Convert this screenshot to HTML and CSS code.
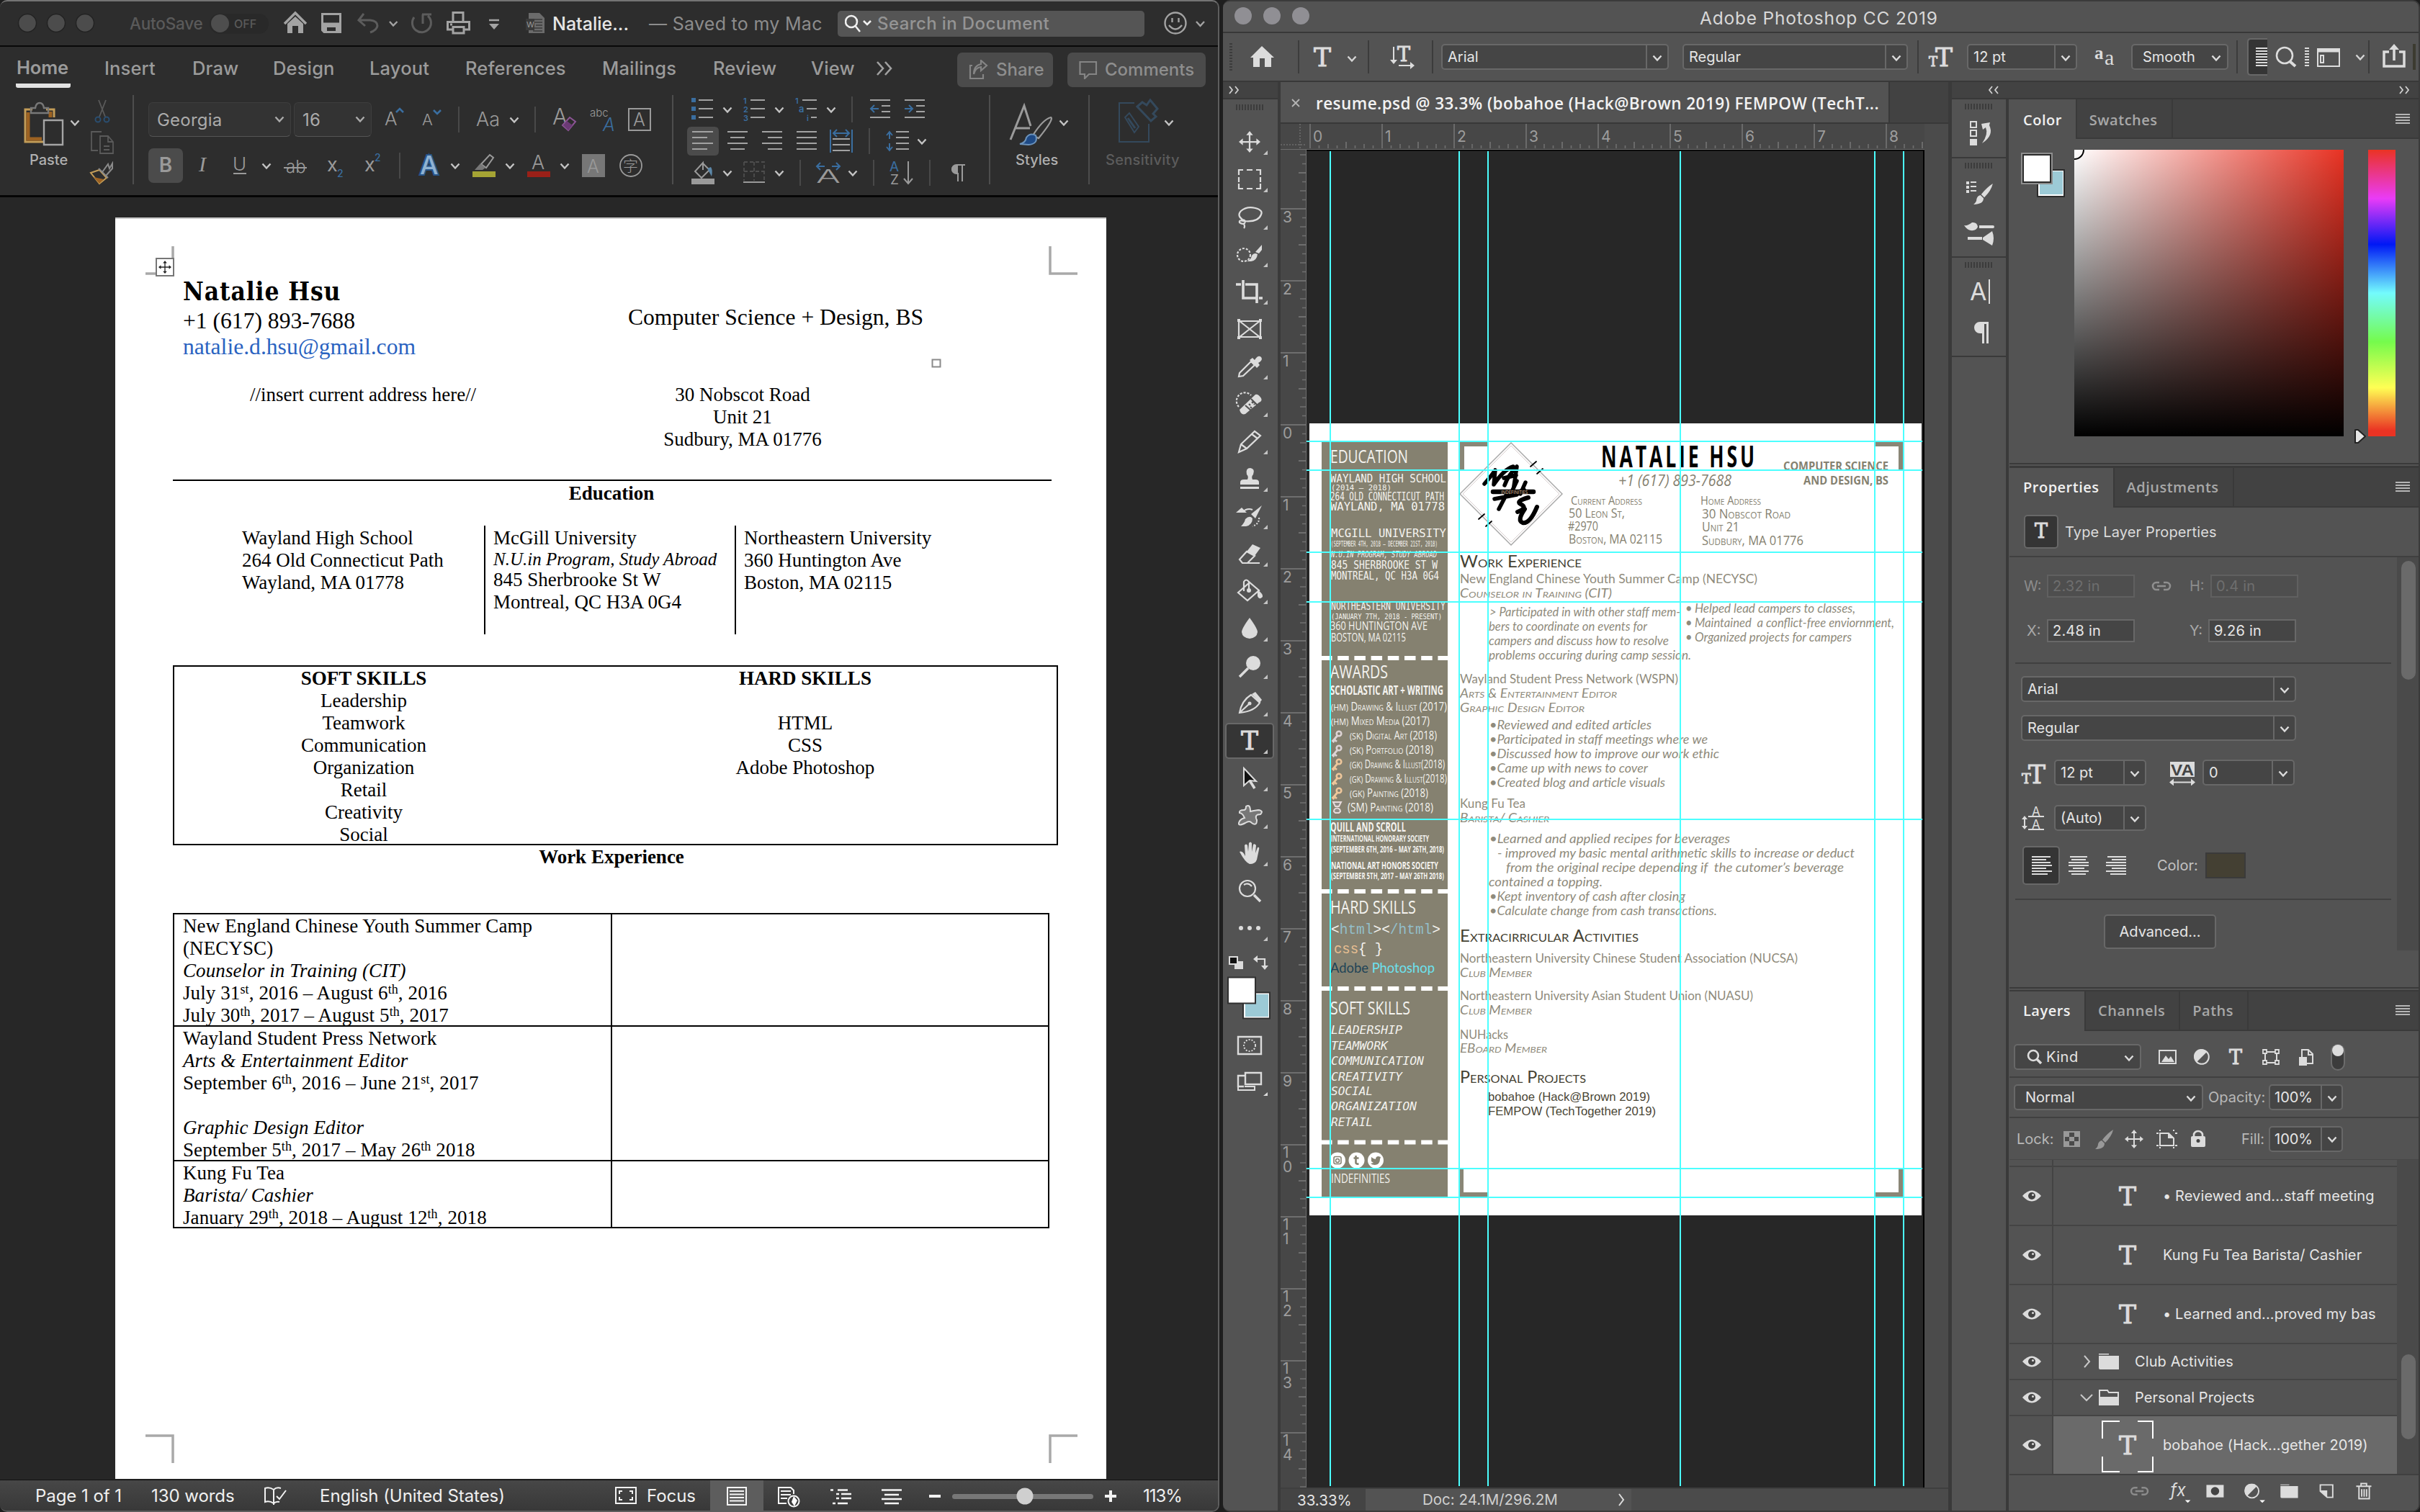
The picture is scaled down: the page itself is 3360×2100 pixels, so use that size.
FILE: index.html
```html
<!DOCTYPE html>
<html lang="en">
<head>
<meta charset="utf-8">
<title>Resume workspace</title>
<link rel="stylesheet" href="styles.css">
</head>
<body>
<svg class="defs" width="0" height="0">
  <defs>
    <symbol id="chev" viewBox="0 0 14 10" overflow="visible"><path d="M1.5 1.5L7 7.5L12.5 1.5" fill="none" stroke="currentColor" stroke-width="2.4"/></symbol>
    <symbol id="move" viewBox="-16 -16 32 32" overflow="visible"><path d="M0-12V12M-12 0H12" stroke="currentColor" stroke-width="2.4"/><path d="M0-16l5 6h-10zM0 16l5-6h-10zM-16 0l6-5v10zM16 0l-6-5v10z" fill="currentColor"/></symbol>
    <symbol id="eye" viewBox="0 0 26 16"><path d="M0 8Q13-7 26 8Q13 23 0 8z" fill="#dcdcdc"/><circle cx="13" cy="8" r="5" fill="#444"/><circle cx="14.500" cy="6.500" r="1.500" fill="#dcdcdc"/></symbol>
    <symbol id="link" viewBox="0 0 30 16"><path d="M12 13H8A5 5 0 0 1 8 3H12M18 3H22A5 5 0 0 1 22 13H18M9 8H21" fill="none" stroke="currentColor" stroke-width="2.600"/></symbol>
    <symbol id="folder" viewBox="0 0 28 22"><path d="M0 0H14V1.500H0zM0 3H28V22H2Q0 22 0 20z" fill="#dcdcdc"/></symbol>
    <symbol id="half" viewBox="0 0 22 22"><circle cx="11" cy="11" r="9.800" fill="#535353" stroke="#dcdcdc" stroke-width="2"/><path d="M18 4A10 10 0 1 0 4 18z" fill="#dcdcdc"/></symbol>
    <symbol id="menu" viewBox="0 0 20 14"><path d="M0 1H20M0 5H20M0 9H20M0 13H20" stroke="#b5b5b5" stroke-width="1.800"/></symbol>
    <symbol id="brush" viewBox="0 0 26 28"><path d="M25 0Q17 5 10 14L14 18Q23 9 25 0zM9 15L13 19Q13 27 0 27Q4 24 4 20Q5 16 9 15z" fill="currentColor"/></symbol>
    <symbol id="key" viewBox="0 0 16 18"><circle cx="11" cy="5" r="3.300" fill="none" stroke="currentColor" stroke-width="2.600"/><path d="M9 7.500L2 16M4.500 13l3.500 3M1.500 14l3 3" stroke="currentColor" stroke-width="2.800"/></symbol>
  </defs>
</svg>

<section class="word">
  <header class="w-title">
    <svg width="170" height="61" viewBox="0 2 170 61"><g fill="#4c4c4c" stroke="#232323" stroke-width="1.500"><circle cx="38" cy="32" r="12.500"/><circle cx="78" cy="32" r="12.500"/><circle cx="118" cy="32" r="12.500"/></g></svg>
    <span class="autosave">AutoSave</span>
    <span class="toggle"><i></i>OFF</span>
    <svg width="378" height="61" viewBox="382 2 378 61" fill="none" stroke="#a3a3a3" stroke-width="3">
      <path d="M395 33L410 18L425 33" stroke-width="3.500"/><path d="M399 46V33L410 23L421 33V46H414V36H406V46z" fill="#a3a3a3" stroke="none"/>
      <path d="M447.500 19.500H472.500V44.500H450L447.500 42zM447 33H473"/><path d="M448 34H472V44H466V38H454V44H448z" fill="#a3a3a3" stroke="none"/>
      <g stroke="#5c5c5c"><path d="M505 19L498 28L507 36M498 28H514Q524 29 524 36Q523 42 514 45"/><path d="M575 24A13 13 0 1 0 594 22M586 20H599M587 20V33"/></g>
      <path d="M541 30L546 35.500L551.500 30" stroke-width="2.400"/>
      <path d="M629 30V17.500H643V30M628 41H621.500V30.500H651.500V41H645M629 37.500H644V46H629z"/><path d="M625 34h3"/>
      <path d="M679 28H693" stroke-width="2.400"/><path d="M679 33H693L686 41z" fill="#a3a3a3" stroke="none"/>
      <path d="M734 18H749L756 25V46H734z" fill="#6b6b6b" stroke="none"/><path d="M740 27h13M742 31h11M744 35h9M742 39h11M740 43h13" stroke="#3b3b3b" stroke-width="1.500"/><path d="M730 26h12v16h-12z" fill="#3a3a3a" stroke="none"/><text x="731" y="38" fill="#999" stroke="none" class="t-ui" font-size="11">W</text>
    </svg>
    <span class="doc-name">Natalie...</span>
    <span class="doc-saved">— Saved to my Mac</span>
    <div class="w-search">
      <svg width="40" height="30" viewBox="0 0 40 30" fill="none" stroke="#f0f0f0" stroke-width="2.600"><circle cx="9" cy="12" r="8"/><path d="M14.500 18L21 26M26 11L31 16L36 11"/></svg>
      <span>Search in Document</span>
    </div>
    <svg width="80" height="61" viewBox="1605 2 80 61" fill="none" stroke="#a3a3a3" stroke-width="2.400"><circle cx="1632" cy="32" r="14.500"/><path d="M1627.500 25v6M1636.500 25v6M1623 35Q1632 46 1641 35"/><path d="M1661 30L1666.500 36L1672 30"/></svg>
  </header>

  <nav class="w-tabs">
    <b class="on">Home</b><span>Insert</span><span>Draw</span><span>Design</span><span>Layout</span><span>References</span><span>Mailings</span><span>Review</span><span>View</span>
    <svg width="28" height="22" viewBox="0 0 28 22" fill="none" stroke="#a0a0a0" stroke-width="2.600"><path d="M2 2L10 11L2 20M13 2L21 11L13 20"/></svg>
    <div class="w-btn share"><svg width="28" height="28" viewBox="0 0 28 28" fill="none" stroke="#858585" stroke-width="2.200"><path d="M5 8H2V26H20V20M7 20Q9 11 17 10V15L25 8L17 1V6Q7 8 7 20z"/></svg>Share</div>
    <div class="w-btn comments"><svg width="26" height="26" viewBox="0 0 26 26" fill="none" stroke="#858585" stroke-width="2.200"><path d="M1.500 2H24V19H14L8 25V19H1.500z"/></svg>Comments</div>
  </nav>

  <div class="ribbon">
    <div class="g-paste">
      <svg width="168" height="76" viewBox="16 134 168 76" fill="none">
        <path d="M45 152H35V197H60" stroke="#c39d58" stroke-width="3"/><path d="M39 156V193H58" stroke="#9c6222" stroke-width="5"/><path d="M64 152H75V163" stroke="#c39d58" stroke-width="3"/><path d="M70 155V163" stroke="#9c6222" stroke-width="5"/>
        <path d="M43 157V150H49Q50 143 55 143Q60 143 61 150H67V157z" stroke="#787878" stroke-width="2.400"/><path d="M61 167H87V201H61z" stroke="#a5a5a5" stroke-width="2.400"/>
        <use href="#chev" x="97" y="166" width="14" height="10" color="#c4c4c4"/>
        <path d="M137 139L146 162M147 139L138 162" stroke="#5a5a5a" stroke-width="1.800"/><circle cx="136" cy="166" r="3.500" stroke="#2a4e70" stroke-width="2"/><circle cx="148" cy="166" r="3.500" stroke="#2a4e70" stroke-width="2"/>
        <path d="M136 209H127V183H141M139 189H150L157 197V213H139zM150 189V197H157M144 203h8M144 208h8" stroke="#5a5a5a" stroke-width="1.800"/>
      </svg>
      <div class="paste-row"><span>Paste</span>
        <svg width="34" height="34" viewBox="125 224 34 34" fill="none" stroke-width="2"><path d="M127 240L139 236L149 247L139 255z" stroke="#c39d58"/><path d="M131 246l14 3-6 6z" fill="#9c6222"/><path d="M138 234L151 247M143 239L151 228L153 234L157 227V234L148 244" stroke="#8a8a8a"/></svg>
      </div>
    </div>
    <i class="vr"></i>
    <div class="g-font">
      <div class="font-row">
        <div class="combo fam"><span>Georgia</span><svg width="14" height="10"><use href="#chev" width="14" height="10"/></svg></div>
        <div class="combo size"><span>16</span><svg width="14" height="10"><use href="#chev" width="14" height="10"/></svg></div>
        <svg width="400" height="52" viewBox="526 140 400 52" fill="none" class="t-light">
          <g fill="#9a9a9a"><text x="534" y="174" font-size="26">A</text><text x="586" y="174" font-size="22">A</text><text x="661" y="175" font-size="27">Aa</text><text x="767" y="173" font-size="31">A</text><text x="819" y="162" font-size="15">abc</text></g>
          <path d="M550 156L555 151L560 156M602 153L607 158L612 153" stroke="#3a6ea0" stroke-width="2.600"/>
          <path d="M637 148V184M743 148V184" stroke="#505050" stroke-width="1.600"/>
          <use href="#chev" x="707" y="162" width="14" height="10" color="#c4c4c4"/>
          <path d="M781 174L791 163L799 169L789 181z" stroke="#8d5596" stroke-width="2"/><path d="M782 174L787 168L795 174L789 181z" fill="#6b3a75"/>
          <text x="837" y="182" font-size="25" font-style="italic" fill="#3a6ea0">A</text>
          <path d="M873 151H903V181H873z" stroke="#9a9a9a" stroke-width="2"/><text x="879" y="175" font-size="25" fill="#9a9a9a">A</text>
        </svg>
      </div>
      <div class="font-row two">
        <span class="bold-btn">B</span>
        <svg width="664" height="52" viewBox="262 204 664 52" fill="none" class="t-light">
          <g fill="#9a9a9a"><text x="276" y="238" font-size="30" font-style="italic" class="t-serif">I</text><text x="323" y="237" font-size="26">U</text><text x="397" y="240" font-size="24">ab</text><text x="454" y="238" font-size="27" font-weight="400">x</text><text x="506" y="238" font-size="27" font-weight="400">x</text><text x="738" y="235" font-size="27">A</text></g>
          <g fill="#3a6ea0"><text x="468" y="246" font-size="14" font-weight="500">2</text><text x="520" y="224" font-size="14" font-weight="500">2</text></g>
          <path d="M324 241H342M394 233H426" stroke="#9a9a9a" stroke-width="2"/>
          <path d="M555 212V248" stroke="#505050" stroke-width="1.600"/>
          <text x="583" y="242" font-size="36" font-weight="500" fill="#8fb2d2" stroke="#27558a" stroke-width="4" paint-order="stroke">A</text>
          <g color="#c4c4c4"><use href="#chev" x="363" y="226" width="14" height="10"/><use href="#chev" x="625" y="226" width="14" height="10"/><use href="#chev" x="701" y="226" width="14" height="10"/><use href="#chev" x="777" y="226" width="14" height="10"/></g>
          <path d="M656 238h32v8h-32z" fill="#a5a434"/><path d="M732 238h32v8h-32z" fill="#9a2018"/>
          <path d="M668 228L680 215L685 219L675 233z" stroke="#9a9a9a" stroke-width="2"/><path d="M659 236L667 227L674 233L670 236z" fill="#777"/>
          <path d="M808 214h32v32h-32z" fill="#777"/><text x="815" y="240" font-size="25" fill="#999">A</text>
          <circle cx="876" cy="230" r="15" stroke="#9a9a9a" stroke-width="1.800"/><text x="865" y="238" font-size="21" fill="#9a9a9a" class="t-cjk">字</text>
        </svg>
      </div>
    </div>
    <i class="vr"></i>
    <svg width="438" height="140" viewBox="935 132 438 140" fill="none" class="t-ui">
      <path d="M954 184Q954 178 960 178H992Q998 178 998 184V212Q998 218 992 218H960Q954 218 954 212z" fill="#4b4b4b"/>
      <path d="M960 138h6v6h-6zM960 150h6v6h-6zM960 162h6v6h-6z" fill="#3a6ea0"/>
      <g fill="#3a6ea0" font-size="11" font-weight="600"><text x="1032" y="146">1</text><text x="1032" y="158">2</text><text x="1032" y="170">3</text><text x="1104" y="146">1</text><text x="1109" y="158" font-size="13">a</text><text x="1120" y="170">i</text></g>
      <path d="M970 141H990M970 153H990M970 165H990M1042 141H1062M1042 153H1062M1042 165H1062M1114 141H1134M1120 153H1134M1126 165H1134M1208 141H1236M1224 149H1236M1224 157H1236M1208 165H1236M1256 141H1284M1272 149H1284M1272 157H1284M1256 165H1284
        M961 185H990M961 193H982M961 201H990M961 209H982M1010 185H1038M1014 193H1034M1010 201H1038M1014 209H1034M1058 185H1086M1066 193H1086M1058 201H1086M1066 209H1086M1106 185H1134M1106 193H1134M1106 201H1134M1106 209H1134M1156 195H1180M1156 203H1180M1156 211H1180M1244 185H1262M1244 193H1262M1244 201H1262M1244 209H1262" stroke="#a2a2a2" stroke-width="2"/>
      <path d="M1220 153H1209M1214 148L1209 153L1214 158M1256 153H1267M1262 148L1267 153L1262 158M1153 182V214M1183 182V214M1157 187H1179M1162 182L1157 187L1162 192M1174 182L1179 187L1174 192M1235 186V195M1235 201V211M1231 190L1235 185L1239 190M1231 206L1235 211L1239 206M1135 233H1145M1139 228L1134 233L1139 238M1155 233H1165M1161 228L1166 233L1161 238" stroke="#3a6ea0" stroke-width="2"/>
      <path d="M1183 136V172M1207 180V216M1111 224V260M1213 224V260M1291 224V260" stroke="#505050" stroke-width="1.600"/>
      <g color="#c4c4c4"><use href="#chev" x="1003" y="150" width="14" height="10"/><use href="#chev" x="1075" y="150" width="14" height="10"/><use href="#chev" x="1147" y="150" width="14" height="10"/><use href="#chev" x="1273" y="194" width="14" height="10"/><use href="#chev" x="1003" y="238" width="14" height="10"/><use href="#chev" x="1075" y="238" width="14" height="10"/><use href="#chev" x="1177" y="238" width="14" height="10"/></g>
      <path d="M960 250h32v8h-32z" fill="#9a9a9a"/><path d="M975 228L985 238L974 249L965 240L976 228V238" stroke="#9a9a9a" stroke-width="2"/><path d="M982 236l5-2q3 4 1 13z" fill="#5c87a8"/>
      <path d="M1033 227H1061V253M1033 227V253M1047 227V253M1033 240H1061" stroke="#4e4e4e" stroke-width="1.800" stroke-dasharray="5 3"/><path d="M1032 255H1062" stroke="#9a9a9a" stroke-width="2"/>
      <text x="1133" y="256" font-size="26" font-weight="300" textLength="34" lengthAdjust="spacingAndGlyphs" fill="#9a9a9a">A</text>
      <text x="1235" y="240" font-size="19" fill="#3a6ea0">A</text><text x="1236" y="258" font-size="19" fill="#9a9a9a">Z</text><path d="M1261 226V256M1255 250L1261 257L1267 250" stroke="#9a9a9a" stroke-width="2"/>
      <path d="M1340 231H1328A6 6 0 0 0 1328 243H1330V254M1336 231V254" stroke="#9a9a9a" stroke-width="2"/><path d="M1330 231h-3a6 6 0 0 0 0 12h3z" fill="#9a9a9a"/>
    </svg>
    <i class="vr"></i>
    <div class="g-big styles">
      <svg width="100" height="78" viewBox="1393 132 100 78" fill="none"><path d="M1403 194L1422 147L1431 175M1409 178H1430" stroke="#9a9a9a" stroke-width="3"/><path d="M1434 188Q1448 166 1459 163Q1464 165 1442 192z" stroke="#9a9a9a" stroke-width="2.200"/><path d="M1416 200Q1424 198 1425 191Q1430 184 1438 188Q1442 200 1428 201z" fill="#1e4a86" stroke="#6c93bb" stroke-width="2"/><use href="#chev" x="1470" y="166" width="14" height="10" color="#c4c4c4"/></svg>
      <span>Styles</span>
    </div>
    <i class="vr"></i>
    <div class="g-big sens">
      <svg width="110" height="78" viewBox="1536 132 110 78" fill="none" stroke="#34495c" stroke-width="2"><path d="M1576 143H1555V197H1596V172"/><path d="M1563 163L1569 157L1582 176L1576 184z"/><path d="M1567 164L1577 178M1580 148L1587 142L1593 146L1598 139L1608 151L1602 158L1606 162L1599 168z" stroke-width="3"/><use href="#chev" x="1617" y="166" width="14" height="10" color="#c4c4c4" stroke="none"/></svg>
      <span>Sensitivity</span>
    </div>
  </div>

  <main class="w-canvas">
    <article class="page">
      <svg class="marks" width="1376" height="1752" viewBox="160 302 1376 1752" fill="none" stroke="#a9a9a9" stroke-width="3.500"><path d="M202 380H240V342M1496 380H1458V342M202 1994H240V2032M1496 1994H1458V2032"/><path d="M217 359H241V383H217z" fill="#fff" stroke="#777" stroke-width="2"/><path d="M1294.500 499.500h11v10h-11z" stroke="#8a8a8a" stroke-width="2"/><use href="#move" x="220" y="362" width="18" height="18" color="#222" stroke="none"/></svg>
      <div class="head">
        <div class="who"><h1>Natalie Hsu</h1><p>+1 (617) 893-7688</p><p class="mail">natalie.d.hsu@gmail.com</p></div>
        <p class="degree">Computer Science + Design, BS</p>
      </div>
      <div class="addr"><p>//insert current address here//</p><p>30 Nobscot Road<br>Unit 21<br>Sudbury, MA 01776</p></div>
      <h2 class="edu-h">Education</h2>
      <div class="edu">
        <p>Wayland High School<br>264 Old Connecticut Path<br>Wayland, MA 01778</p>
        <div><p>McGill University</p><p class="prog">N.U.in Program, Study Abroad</p><p>845 Sherbrooke St W<br>Montreal, QC H3A 0G4</p></div>
        <p>Northeastern University<br>360 Huntington Ave<br>Boston, MA 02115</p>
      </div>
      <div class="skills">
        <p><b>SOFT SKILLS</b><br>Leadership<br>Teamwork<br>Communication<br>Organization<br>Retail<br>Creativity<br>Social</p>
        <p><b>HARD SKILLS</b><br><br>HTML<br>CSS<br>Adobe Photoshop</p>
      </div>
      <h2 class="work-h">Work Experience</h2>
      <div class="jobs">
        <p>New England Chinese Youth Summer Camp<br>(NECYSC)<br><em>Counselor in Training (CIT)</em><br>July 31<sup>st</sup>, 2016 – August 6<sup>th</sup>, 2016<br>July 30<sup>th</sup>, 2017 – August 5<sup>th</sup>, 2017</p><p></p>
        <p>Wayland Student Press Network<br><em>Arts &amp; Entertainment Editor</em><br>September 6<sup>th</sup>, 2016 – June 21<sup>st</sup>, 2017<br><br><em>Graphic Design Editor</em><br>September 5<sup>th</sup>, 2017 – May 26<sup>th</sup> 2018</p><p></p>
        <p>Kung Fu Tea<br><em>Barista/ Cashier</em><br>January 29<sup>th</sup>, 2018 – August 12<sup>th</sup>, 2018</p><p></p>
      </div>
    </article>
  </main>

  <footer class="w-status">
    <span>Page 1 of 1</span><span>130 words</span>
    <svg width="40" height="30" viewBox="0 0 40 30" fill="none" stroke="#f2f2f2" stroke-width="2"><path d="M14 6Q8 2 2 4V23Q8 21 14 25Q17 22 22 23M14 6V27M14 6Q18 2 24 4M18 15L22 19L31 7"/></svg>
    <span>English (United States)</span>
    <svg width="32" height="26" viewBox="0 0 32 26" fill="none" stroke="#f2f2f2" stroke-width="2"><path d="M1 1H29V23H1zM6 10V6H10M20 6H24V10M24 14V18H20M10 18H6V14"/></svg>
    <span>Focus</span>
    <svg width="270" height="43" viewBox="986 2055 270 43" fill="none" stroke="#f5f5f5" stroke-width="2">
      <path d="M986 2055H1060V2098H986z" fill="#5d5d5d" stroke="none"/><path d="M1010 2065H1036V2089H1010zM1013 2070h20M1013 2074.500h20M1013 2079h20M1013 2083.500h20"/>
      <path d="M1102 2074V2069L1098 2065H1081V2087H1092M1084 2070h14M1084 2075h14M1084 2080h9"/><circle cx="1102" cy="2084" r="7.500"/><path d="M1102 2077l5 6-4 8-4-6z" fill="#fff" stroke="none"/>
      <path d="M1153 2068.500h4M1163 2068.500h14M1161 2074h4M1168 2074h14M1161 2080h4M1168 2080h14M1156 2087h4M1163 2087h14" stroke-width="2.400"/>
      <path d="M1224 2068.500h28M1228 2075h20M1224 2081h28M1228 2087h20" stroke-width="2.400"/>
    </svg>
    <svg width="280" height="43" viewBox="1284 2055 280 43"><path d="M1290 2075h16v4h-16zM1534 2075h16v4h-16zM1540 2069h4v16h-4z" fill="#f2f2f2"/><rect x="1322" y="2074" width="196" height="7" rx="3.500" fill="#777"/><circle cx="1423" cy="2077" r="11.500" fill="#cfcfcf"/></svg>
    <span>113%</span>
  </footer>
</section>

<section class="ps">
  <header class="p-title">
    <svg width="130" height="42" viewBox="1698 2 130 42" fill="#908f94"><circle cx="1726" cy="22" r="12"/><circle cx="1766" cy="22" r="12"/><circle cx="1806" cy="22" r="12"/></svg>
    <span>Adobe Photoshop CC 2019</span>
  </header>
  <div class="p-options">
    <svg width="303" height="66" viewBox="1698 46 303 66" fill="none">
      <path d="M1709 60V100" stroke="#3c3c3c" stroke-width="4" stroke-dasharray="2 2"/>
      <path d="M1752 64L1769 80H1765V93H1756V81H1749V93H1740V80H1736z" fill="#dcdcdc"/>
      <path d="M1803 56V102M1900 56V102M1989 56V102" stroke="#3c3c3c" stroke-width="2"/>
      <g fill="#dcdcdc" class="t-slab"><text x="1824" y="92" font-size="36">T</text><text x="1940" y="85" font-size="27">T</text></g>
      <use href="#chev" x="1870" y="77" width="14" height="10" color="#d5d5d5"/>
      <path d="M1935 65V86M1942 91H1960" stroke="#dcdcdc" stroke-width="2"/><path d="M1930 83h10l-5 6zM1958 86v10l6-5z" fill="#dcdcdc"/>
    </svg>
    <div class="sel w316"><span>Arial</span><i><svg><use href="#chev"/></svg></i></div>
    <div class="sel w312"><span>Regular</span><i><svg><use href="#chev"/></svg></i></div>
    <svg width="82" height="66" viewBox="2649 46 82 66"><path d="M2663 56V102" stroke="#3c3c3c" stroke-width="2"/><g fill="#dcdcdc" class="t-slab"><text x="2678" y="92" font-size="18">T</text><text x="2687" y="92" font-size="36">T</text></g></svg>
    <div class="sel w153"><span>12 pt</span><i><svg><use href="#chev"/></svg></i></div>
    <svg width="75" height="66" viewBox="2884 46 75 66"><g fill="#dcdcdc" class="t-serif"><text x="2908" y="82" font-size="25" font-weight="700">a</text><text x="2922" y="90" font-size="30">a</text></g></svg>
    <div class="sel w135"><span>Smooth</span><i class="plain"><svg><use href="#chev"/></svg></i></div>
    <svg width="264" height="66" viewBox="3094 46 264 66" fill="none" stroke="#dcdcdc">
      <path d="M3106 56V102M3289 56V102" stroke="#3c3c3c" stroke-width="2"/>
      <path d="M3148 54H3125Q3121 54 3121 58V100Q3121 104 3125 104H3148" fill="#353535" stroke="#686868" stroke-width="2"/>
      <path d="M3132 67h16M3132 71h16M3132 75h16M3132 79h16M3132 83h16M3132 87h16M3132 91h16M3200 67h6M3200 71h6M3200 75h6M3200 79h6M3200 83h6M3200 87h6M3200 91h6" stroke-width="2"/>
      <circle cx="3172" cy="77" r="11" stroke-width="2.600"/><path d="M3179 85L3187 92" stroke-width="4"/>
      <path d="M3218 68H3248V92H3218z" stroke-width="2"/><path d="M3218 68H3248V72H3218z" fill="#dcdcdc"/><path d="M3222 77h4v10h-4z" stroke-width="2"/>
      <use href="#chev" x="3270" y="75" width="14" height="10" color="#d5d5d5" stroke="none"/>
      <path d="M3317 72H3310V92H3338V72H3331M3324 66V84" stroke-width="3.500"/><path d="M3324 61l7 8h-14z" fill="#dcdcdc" stroke="none"/>
      <path d="M3352 61V97" stroke="#3c3b30" stroke-width="4"/>
    </svg>
  </div>

  <div class="p-body">
    <aside class="tools">
      <div class="dock-head"><svg width="16" height="12" viewBox="0 0 16 12" fill="none" stroke="#d0d0d0" stroke-width="1.800"><path d="M1 1L5 6L1 11M9 1L13 6L9 11"/></svg></div>
      <div class="grip"></div>
      <div class="tool"><svg viewBox="-37 -26 76 52"><use href="#move" x="-15" y="-15" width="30" height="30"/><path class="c" d="M25 12V18H19z"/></svg></div>
      <div class="tool"><svg viewBox="-37 -26 76 52"><path class="s" d="M-15-6V-13H-9M-4-13H4M9-13H15V-6M15-3V4M15 6V13H9M4 13H-4M-9 13H-15V6M-15 4V-3"/><path class="c" d="M25 12V18H19z"/></svg></div>
      <div class="tool"><svg viewBox="-37 -26 76 52"><path class="s" d="M-10 4Q-18-2-12-8Q-4-15 8-12Q19-9 16-3Q12 8-8 6Q-15 4-14 8Q-10 11-7 9Q-4 5-10 4M-8 10Q-6 14-8 16"/><path class="c" d="M25 12V18H19z"/></svg></div>
      <div class="tool"><svg viewBox="-37 -26 76 52"><circle class="s" cx="-8" cy="1" r="9" stroke-dasharray="3 2"/><path class="f" d="M-4 10Q2 8 3 2Q6-3 11 0Q10 9 2 10zM8-3L17-13V-6L13-1z"/><path class="c" d="M25 12V18H19z"/></svg></div>
      <div class="tool"><svg viewBox="-37 -26 76 52"><path class="s b" d="M-19-10H-12M-9-16V9H9M-6-10H10V16M13 9H18"/><path class="c" d="M25 12V18H19z"/></svg></div>
      <div class="tool"><svg viewBox="-37 -26 76 52"><path class="s" d="M-15-12V12M15-12V12M-15-11H15M-15 11H15M-14-11L14 11M14-11L-14 11"/><path class="f" d="M-17-14h4v4h-4zM13-14h4v4h-4zM-17 10h4v4h-4zM13 10h4v4h-4z"/></svg></div>
      <div class="tool"><svg viewBox="-37 -26 76 52"><path class="s" d="M-15 14L-14 9L2-7L7-2L-9 13z"/><path class="f" d="M0-9L4-12L7-9Q12-17 16-13Q19-9 12-5L14-2L10 2z"/><path class="c" d="M25 12V18H19z"/></svg></div>
      <div class="tool"><svg viewBox="-37 -26 76 52"><path class="s" d="M-15 4A10 10 0 0 1 2-12" stroke-dasharray="3 2"/><path class="f" d="M-14 8L8-13Q12-14 16-8Q18-4 13-2L-6 14Q-12 16-14 8z"/><path d="M-6 2L3 10M2-7L11 2M-1 0l2 2M3-3l2 2M1 4l2 2M6 0l1 1" stroke="#535353" stroke-width="2.200"/><path class="c" d="M25 12V18H19z"/></svg></div>
      <div class="tool"><svg viewBox="-37 -26 76 52"><path class="s" d="M-15 15L-12 4L7-14L15-8L-4 10zM-12 4L-4 10M3-10L11-4"/><path class="c" d="M25 12V18H19z"/></svg></div>
      <div class="tool"><svg viewBox="-37 -26 76 52"><path class="f" d="M-13 5Q-13 1-8 1H-3Q-1-3-4-6Q-6-15 1-15Q8-14 5-6Q2-3 4 1H8Q13 1 13 5V8H-13zM-13 11H13V14H-13z"/><path class="c" d="M25 12V18H19z"/></svg></div>
      <div class="tool"><svg viewBox="-37 -26 76 52"><path class="f" d="M-19-5L-11-12L-4-5zM-12 14Q-7 9-6 4Q0-2 4 3Q4 12-5 14zM2-3L17-15L8 3z"/><path class="s" d="M-10-6Q-3-12 4-9"/><path class="s" d="M13 2Q14 10 4 14" stroke-dasharray="2 2"/><path class="c" d="M25 12V18H19z"/></svg></div>
      <div class="tool"><svg viewBox="-37 -26 76 52"><path class="s" d="M-14 8L-4-3L7 3L-3 13H-10z"/><path class="f" d="M-4-3L4-13L15-8L7 3zM-8 12H14V14H-8z"/><path class="c" d="M25 12V18H19z"/></svg></div>
      <div class="tool"><svg viewBox="-37 -26 76 52"><path class="s" d="M-16 2L0-12L13-1L-3 13zM-8 0V-13Q-5-18-1-13V-2"/><circle class="f" cx="-1" cy="-1" r="3"/><path class="f" d="M11-2Q19 4 18 8Q13 13 11 7z"/><path class="c" d="M25 12V18H19z"/></svg></div>
      <div class="tool"><svg viewBox="-37 -26 76 52"><path class="f" d="M0-15Q11 0 11 5Q10 13 0 14Q-10 13-11 5Q-11 0 0-15z"/><path class="c" d="M25 12V18H19z"/></svg></div>
      <div class="tool"><svg viewBox="-37 -26 76 52"><circle class="f" cx="5" cy="-4" r="10"/><path class="s b" d="M-2 3L-14 15"/><path class="c" d="M25 12V18H19z"/></svg></div>
      <div class="tool"><svg viewBox="-37 -26 76 52"><path class="s" d="M-14 13Q-11-4 2-12L14-1Q7 11-14 13zM-13 12L-1 1"/><path class="f" d="M3-13l5-3L17-5l-3 4z"/><circle class="f" cx="0" cy="0" r="2.500"/><path class="c" d="M25 12V18H19z"/></svg></div>
      <div class="tool on"><svg viewBox="-37 -26 76 52"><text x="-12" y="12" font-size="36" class="t-slab" fill="#dcdcdc">T</text><path class="c" d="M25 12V18H19z"/></svg></div>
      <div class="tool"><svg viewBox="-37 -26 76 52"><path d="M-8-14L9 4L0 3L-8 10z" fill="#111" stroke="#dcdcdc" stroke-width="2"/><path class="s b" d="M0 3L7 14"/><path class="c" d="M25 12V18H19z"/></svg></div>
      <div class="tool"><svg viewBox="-37 -26 76 52"><path d="M-5-13Q1-17 1-6Q5-7 12-8Q20-7 15-2Q6-2 10 6Q10 15 3 10Q0 6-6 10Q-16 15-15 10Q-14 5-7 3Q-10-4-14-4Q-15-8-8-8Q-5-8-5-13z" fill="#777" stroke="#dcdcdc" stroke-width="2"/><path class="c" d="M25 12V18H19z"/></svg></div>
      <div class="tool"><svg viewBox="-37 -26 76 52"><path class="f" d="M-14-2Q-10-4-6 4L-7-11Q-5-14-3-11L-2-2L-1-14Q1-17 3-14V-2L5-12Q7-14 9-11L8 0L11-8Q14-9 13-5L10 9Q8 15 0 15Q-6 13-14-2z"/><path class="c" d="M25 12V18H19z"/></svg></div>
      <div class="tool"><svg viewBox="-37 -26 76 52"><circle class="s" cx="-3" cy="-3" r="11"/><path class="s" d="M-8-8Q-2-12 3-6" stroke-width="1.500"/><path class="s b" d="M6 6L15 15"/></svg></div>
      <div class="tool"><svg viewBox="-37 -26 76 52"><circle class="f" cx="-12" r="3"/><circle class="f" r="3"/><circle class="f" cx="12" r="3"/><path class="c" d="M25 12V18H19z"/></svg></div>
      <svg width="75" height="215" viewBox="1698 1315 75 215" fill="none">
        <path d="M1714 1335h12v11h-12z" fill="#dcdcdc"/><path d="M1707 1329h11v10h-11z" fill="#111" stroke="#dcdcdc" stroke-width="2"/>
        <path d="M1744 1332H1756V1344" stroke="#dcdcdc" stroke-width="2.200"/><path d="M1740 1332l6-5v10zM1756 1347l5-6h-10z" fill="#dcdcdc"/>
        <path d="M1726 1378.500h37v36h-37z" fill="#fff" stroke="#303030" stroke-width="2"/><path d="M1729 1381h32v31h-32z" fill="#9ccad6"/>
        <path d="M1705 1357.500h38v36h-38z" fill="#fff" stroke="#303030" stroke-width="2"/>
        <path d="M1719 1440h32v24h-32z" stroke="#dcdcdc" stroke-width="2.400"/><circle cx="1735" cy="1452" r="8" stroke="#dcdcdc" stroke-width="2" stroke-dasharray="2 2"/>
        <path d="M1727 1509H1719V1494H1729M1729 1490H1751V1506H1729z" stroke="#dcdcdc" stroke-width="2.400"/><path d="M1728 1509H1742V1514H1719V1509" stroke="#dcdcdc" stroke-width="2"/><path d="M1760 1517v5h-6z" fill="#dcdcdc"/>
      </svg>
    </aside>

    <div class="docwin">
      <div class="doc-tabs"><div class="doc-tab"><svg width="14" height="14" viewBox="0 0 14 14"><path d="M2 2L12 12M12 2L2 12" stroke="#b5b5b5" stroke-width="1.800"/></svg><span>resume.psd @ 33.3% (bobahoe (Hack@Brown 2019) FEMPOW (TechT...</span></div></div>
      <svg class="ruler-x" width="894" height="36" viewBox="1778 172 894 36">
        <defs><pattern id="tx" x="1818" y="172" width="100" height="36" patternUnits="userSpaceOnUse"><path d="M1 0V36M51 25V36" stroke="#6e6e6e" stroke-width="1.800"/><path d="M13.500 30V36M26 28V36M38.500 30V36M63.500 30V36M76 28V36M88.500 30V36" stroke="#6e6e6e" stroke-width="1.600"/></pattern></defs>
        <rect x="1814" y="172" width="858" height="34" fill="url(#tx)"/><path d="M1778 201H1814M1805 172V208" stroke="#6e6e6e" stroke-dasharray="2 2" stroke-width="1.500"/>
        <path d="M1778 207.500H2672" stroke="#6e6e6e" stroke-width="1"/>
        <g class="t-ui" font-size="21" fill="#9d9d9d"><text x="1823" y="197">0</text><text x="1923" y="197">1</text><text x="2023" y="197">2</text><text x="2123" y="197">3</text><text x="2223" y="197">4</text><text x="2323" y="197">5</text><text x="2423" y="197">6</text><text x="2523" y="197">7</text><text x="2623" y="197">8</text></g>
      </svg>
      <div class="doc-mid">
        <svg width="36" height="1858" viewBox="1778 208 36 1858">
          <defs><pattern id="ty" x="1778" y="189" width="36" height="100" patternUnits="userSpaceOnUse"><path d="M0 1H36M25 51H36" stroke="#6e6e6e" stroke-width="1.800"/><path d="M30 13.500H36M27 26H36M30 38.500H36M30 63.500H36M27 76H36M30 88.500H36" stroke="#6e6e6e" stroke-width="1.600"/></pattern></defs>
          <rect x="1778" y="208" width="36" height="1858" fill="url(#ty)"/><path d="M1813.500 208V2066" stroke="#6e6e6e"/>
          <g class="t-ui" font-size="21" fill="#9d9d9d"><text x="1781" y="309">3</text><text x="1781" y="409">2</text><text x="1781" y="509">1</text><text x="1781" y="609">0</text><text x="1781" y="709">1</text><text x="1781" y="809">2</text><text x="1781" y="909">3</text><text x="1781" y="1009">4</text><text x="1781" y="1109">5</text><text x="1781" y="1209">6</text><text x="1781" y="1309">7</text><text x="1781" y="1409">8</text><text x="1781" y="1509">9</text><text x="1781" y="1608">1</text><text x="1781" y="1628">0</text><text x="1781" y="1708">1</text><text x="1781" y="1728">1</text><text x="1781" y="1808">1</text><text x="1781" y="1828">2</text><text x="1781" y="1908">1</text><text x="1781" y="1928">3</text><text x="1781" y="2008">1</text><text x="1781" y="2028">4</text></g>
        </svg>
        <svg class="canvas" width="858" height="1858" viewBox="1814 208 858 1858">
          <path d="M1814 208.500H2672M2671 208V2066" stroke="#000" stroke-width="2"/>
          <rect x="1818" y="588" width="850" height="1100" fill="#fff"/>
          <rect x="1835" y="614" width="175" height="1049" fill="#858170"/>
          <path d="M1834 914H2010M1834 1238H2010M1834 1373H2010M1834 1586.500H2010" stroke="#fff" stroke-width="6" stroke-dasharray="15.500 7.700"/>
          <path d="M2066 617H2030V652M2603 617H2639V652M2066 1659H2029V1623M2603 1659H2639V1623" fill="none" stroke="#8a8676" stroke-width="6"/>
          <g fill="#f4f3ef">
            <g class="cond" font-size="25"><text x="1847" y="643" textLength="108" lengthAdjust="spacingAndGlyphs">EDUCATION</text><text x="1847" y="942" textLength="80" lengthAdjust="spacingAndGlyphs">AWARDS</text><text x="1847" y="1269" textLength="119" lengthAdjust="spacingAndGlyphs">HARD SKILLS</text><text x="1847" y="1409" textLength="111" lengthAdjust="spacingAndGlyphs">SOFT SKILLS</text><text x="1848" y="1642.500" font-size="18" textLength="82" lengthAdjust="spacingAndGlyphs">INDEFINITIES</text></g>
            <g class="mono" font-size="15"><text x="1847" y="670" textLength="161" lengthAdjust="spacingAndGlyphs">WAYLAND HIGH SCHOOL</text><text x="1848" y="681" font-size="10" textLength="84" lengthAdjust="spacingAndGlyphs">(2014 – 2018)</text><text x="1847" y="695" textLength="158" lengthAdjust="spacingAndGlyphs">264 OLD CONNECTICUT PATH</text><text x="1847" y="709" textLength="159" lengthAdjust="spacingAndGlyphs">WAYLAND, MA 01778</text><text x="1848" y="746" textLength="160" lengthAdjust="spacingAndGlyphs">MCGILL UNIVERSITY</text><text x="1848" y="759" font-size="10" textLength="148" lengthAdjust="spacingAndGlyphs">(SEPTEMBER 4TH, 2018 – DECEMBER 21ST, 2018)</text><text x="1848" y="774" font-size="12" font-style="italic" textLength="147" lengthAdjust="spacingAndGlyphs">N.U.IN PROGRAM, STUDY ABROAD</text><text x="1848" y="789.500" textLength="148" lengthAdjust="spacingAndGlyphs">845 SHERBROOKE ST W</text><text x="1848" y="805" textLength="150" lengthAdjust="spacingAndGlyphs">MONTREAL, QC H3A 0G4</text><text x="1848" y="847" textLength="159" lengthAdjust="spacingAndGlyphs">NORTHEASTERN UNIVERSITY</text><text x="1848" y="860" font-size="10" textLength="154" lengthAdjust="spacingAndGlyphs">(JANUARY 7TH, 2018 - PRESENT)</text></g>
            <g class="cond" font-size="15.500"><text x="1847" y="875" textLength="135" lengthAdjust="spacingAndGlyphs">360 HUNTINGTON AVE</text><text x="1848" y="890.500" textLength="104" lengthAdjust="spacingAndGlyphs">BOSTON, MA 02115</text></g>
            <g class="bold"><text x="1847" y="965" font-size="18" textLength="157" lengthAdjust="spacingAndGlyphs">SCHOLASTIC ART + WRITING</text><text x="1847" y="1154.500" font-size="17" textLength="105" lengthAdjust="spacingAndGlyphs">QUILL AND SCROLL</text><text x="1848" y="1168.500" font-size="11.500" textLength="136" lengthAdjust="spacingAndGlyphs">INTERNATIONAL HONORARY SOCIETY</text><text x="1848" y="1184" font-size="12" textLength="157" lengthAdjust="spacingAndGlyphs">(SEPTEMBER 6TH, 2016 – MAY 26TH, 2018)</text><text x="1848" y="1207" font-size="15" textLength="149" lengthAdjust="spacingAndGlyphs">NATIONAL ART HONORS SOCIETY</text><text x="1848" y="1221" font-size="12" textLength="157" lengthAdjust="spacingAndGlyphs">(SEPTEMBER 5TH, 2017 – MAY 26TH 2018)</text></g>
            <g class="caps cond" font-size="16"><text x="1848" y="987" textLength="161" lengthAdjust="spacingAndGlyphs"><tspan font-size="13">(HM)</tspan> Drawing &amp; Illust (2017)</text><text x="1848" y="1006.500" textLength="137" lengthAdjust="spacingAndGlyphs"><tspan font-size="13">(HM)</tspan> Mixed Media (2017)</text><text x="1874" y="1026.500" textLength="121" lengthAdjust="spacingAndGlyphs"><tspan font-size="13">(SK)</tspan> Digital Art (2018)</text><text x="1874" y="1046.500" textLength="116" lengthAdjust="spacingAndGlyphs"><tspan font-size="13">(SK)</tspan> Portfolio (2018)</text><text x="1874" y="1066.500" textLength="132" lengthAdjust="spacingAndGlyphs"><tspan font-size="13">(GK)</tspan> Drawing &amp; Illust(2018)</text><text x="1874" y="1086.500" textLength="135" lengthAdjust="spacingAndGlyphs"><tspan font-size="13">(GK)</tspan> Drawing &amp; Illust(2018)</text><text x="1874" y="1106.500" textLength="109" lengthAdjust="spacingAndGlyphs"><tspan font-size="13">(GK)</tspan> Painting (2018)</text><text x="1871" y="1127" textLength="119" lengthAdjust="spacingAndGlyphs">(SM) Painting (2018)</text></g>
            <g class="code" font-size="20"><text x="1848" y="1296.500" textLength="152" lengthAdjust="spacingAndGlyphs">&lt;<tspan fill="#93bfcb">html</tspan>&gt;&lt;<tspan fill="#93bfcb">/html</tspan>&gt;</text><text x="1852" y="1323.500" textLength="68" lengthAdjust="spacingAndGlyphs"><tspan fill="#e8bf92">css</tspan>{ }</text></g>
            <text class="lato" x="1847" y="1351" font-size="18.500" textLength="145" lengthAdjust="spacingAndGlyphs"><tspan fill="#1f4457">Adobe</tspan> <tspan fill="#6ce2ee">Photoshop</tspan></text>
            <g class="mono" font-size="15" font-style="italic"><text x="1848" y="1436" textLength="99" lengthAdjust="spacingAndGlyphs">LEADERSHIP</text><text x="1848" y="1458" textLength="79" lengthAdjust="spacingAndGlyphs">TEAMWORK</text><text x="1848" y="1479" textLength="129" lengthAdjust="spacingAndGlyphs">COMMUNICATION</text><text x="1848" y="1500.500" textLength="99" lengthAdjust="spacingAndGlyphs">CREATIVITY</text><text x="1848" y="1520.500" textLength="58" lengthAdjust="spacingAndGlyphs">SOCIAL</text><text x="1848" y="1542" textLength="119" lengthAdjust="spacingAndGlyphs">ORGANIZATION</text><text x="1848" y="1564" textLength="58" lengthAdjust="spacingAndGlyphs">RETAIL</text></g>
          </g>
          <g color="#dcd3d4"><use href="#key" x="1848" y="1014" width="16" height="18"/><use href="#key" x="1848" y="1034" width="16" height="18"/></g>
          <g color="#eec79b"><use href="#key" x="1848" y="1053" width="16" height="18"/><use href="#key" x="1848" y="1073" width="16" height="18"/><use href="#key" x="1848" y="1093" width="16" height="18"/></g>
          <path d="M1851 1114h11l-3 6h-5zM1852 1127a4.500 4.500 0 1 1 9 0l-2 2h-5z" fill="#8f8b86" stroke="#e5dada" stroke-width="2"/>
          <g fill="#fff"><circle cx="1857" cy="1611.500" r="11"/><circle cx="1883.500" cy="1611.500" r="11"/><circle cx="1910" cy="1611.500" r="11"/></g>
          <rect x="1852" y="1606.500" width="10" height="10" rx="2" fill="none" stroke="#858170" stroke-width="1.600"/><circle cx="1857" cy="1612" r="2.500" fill="none" stroke="#858170" stroke-width="1.500"/><path d="M1882.500 1605v10q0 2 4 1.500M1879.500 1608.500h7" fill="none" stroke="#858170" stroke-width="2.600"/>
          <path d="M1904 1607q3 3 6 3q0-4 4-4l3 1-1 3q0 7-7 8-4 0-6-2l4-1-3-2z" fill="#858170"/>
          <g fill="none" stroke="#a5a5a5"><path d="M2098 615L2169 686L2098 757L2027 686z" stroke-width="1.400"/><path d="M2098 619L2165 686L2098 753L2031 686z" stroke="#d8cfcf" stroke-width="1"/></g>
          <g fill="none" stroke="#000" stroke-linecap="round" stroke-linejoin="round"><path d="M2125 648l8-7M2134 658l8-7M2053 721l8-7M2063 731l8-7" stroke-width="1.800"/><path d="M2061 672Q2070 662 2076 653L2074 673Q2088 652 2101 648M2089 674Q2094 660 2106 648L2102 675M2088 664L2105 660" stroke-width="5.500"/><path d="M2098 685L2106 668M2111 686L2118 670M2098 688L2116 680M2075 693L2106 687M2093 684L2081 707" stroke-width="5.500"/><path d="M2122 691Q2104 696 2111 700Q2122 705 2107 711M2117 707Q2106 723 2114 726Q2124 728 2134 704" stroke-width="6"/><path d="M2073 683H2129" stroke-width="6.500"/></g>
          <text x="2084" y="685.500" font-size="6.500" font-weight="700" fill="#e8c9a8" class="cond" textLength="37" lengthAdjust="spacingAndGlyphs">INDEFINITIES</text>
          <g class="bold"><text x="2223" y="648.500" font-size="41" fill="#000" letter-spacing="6" textLength="217" lengthAdjust="spacingAndGlyphs">NATALIE HSU</text><g fill="#858170" font-size="16.500"><text x="2476" y="652.500" textLength="146" lengthAdjust="spacingAndGlyphs">COMPUTER SCIENCE</text><text x="2504" y="673" textLength="118" lengthAdjust="spacingAndGlyphs">AND DESIGN, BS</text></g></g>
          <g class="cond" fill="#858170"><text x="2247" y="674.500" font-size="21.500" font-style="italic" textLength="157" lengthAdjust="spacingAndGlyphs">+1 (617) 893-7688</text>
            <g class="caps"><g font-size="16"><text x="2181" y="701" textLength="99" lengthAdjust="spacingAndGlyphs">Current Address</text><text x="2361" y="701" textLength="84" lengthAdjust="spacingAndGlyphs">Home Address</text></g><g font-size="18.500"><text x="2178" y="718.500" textLength="78" lengthAdjust="spacingAndGlyphs">50 Leon St,</text><text x="2177" y="737" textLength="42" lengthAdjust="spacingAndGlyphs">#2970</text><text x="2178" y="755" textLength="130" lengthAdjust="spacingAndGlyphs">Boston, MA 02115</text><text x="2363" y="719.500" textLength="123" lengthAdjust="spacingAndGlyphs">30 Nobscot Road</text><text x="2363" y="738" textLength="52" lengthAdjust="spacingAndGlyphs">Unit 21</text><text x="2363" y="756.500" textLength="141" lengthAdjust="spacingAndGlyphs">Sudbury, MA 01776</text></g></g></g>
          <g class="lato caps" fill="#454233" font-size="23"><text x="2027" y="787.500" textLength="169" lengthAdjust="spacingAndGlyphs">Work Experience</text><text x="2027" y="1308" textLength="248" lengthAdjust="spacingAndGlyphs">Extracirricular Activities</text><text x="2027" y="1504" textLength="175" lengthAdjust="spacingAndGlyphs">Personal Projects</text></g>
          <g class="lato" fill="#8f8b7c" font-size="16.500">
            <text x="2027" y="809.500" textLength="413" lengthAdjust="spacingAndGlyphs">New England Chinese Youth Summer Camp (NECYSC)</text><text x="2027" y="948.500" textLength="303" lengthAdjust="spacingAndGlyphs">Wayland Student Press Network (WSPN)</text><text x="2027" y="1122" textLength="91" lengthAdjust="spacingAndGlyphs">Kung Fu Tea</text><text x="2027" y="1337" textLength="469" lengthAdjust="spacingAndGlyphs">Northeastern University Chinese Student Association (NUCSA)</text><text x="2027" y="1389" textLength="407" lengthAdjust="spacingAndGlyphs">Northeastern University Asian Student Union (NUASU)</text><text x="2027" y="1442.500" textLength="67" lengthAdjust="spacingAndGlyphs">NUHacks</text>
            <g class="caps" font-style="italic"><text x="2027" y="829.500" textLength="211" lengthAdjust="spacingAndGlyphs">Counselor in Training (CIT)</text><text x="2027" y="968.500" textLength="218" lengthAdjust="spacingAndGlyphs">Arts &amp; Entertainment Editor</text><text x="2027" y="988.500" textLength="173" lengthAdjust="spacingAndGlyphs">Graphic Design Editor</text><text x="2027" y="1142" textLength="124" lengthAdjust="spacingAndGlyphs">Barista/ Cashier</text><text x="2027" y="1357" textLength="100" lengthAdjust="spacingAndGlyphs">Club Member</text><text x="2027" y="1409" textLength="100" lengthAdjust="spacingAndGlyphs">Club Member</text><text x="2027" y="1462" textLength="121" lengthAdjust="spacingAndGlyphs">EBoard Member</text></g>
            <g font-style="italic"><text x="2068" y="855.500" textLength="265" lengthAdjust="spacingAndGlyphs">&gt; Participated in with other staff mem-</text><text x="2067" y="875.500" textLength="220" lengthAdjust="spacingAndGlyphs">bers to coordinate on events for</text><text x="2067" y="895.500" textLength="250" lengthAdjust="spacingAndGlyphs">campers and discuss how to resolve</text><text x="2067" y="915.500" textLength="281" lengthAdjust="spacingAndGlyphs">problems occuring during camp session.</text>
              <text x="2340" y="851">•</text><text x="2340" y="871">•</text><text x="2340" y="891">•</text><text x="2353" y="851" textLength="223" lengthAdjust="spacingAndGlyphs">Helped lead campers to classes,</text><text x="2353" y="871" textLength="277" lengthAdjust="spacingAndGlyphs">Maintained&#160; a conflict-free enviornment,</text><text x="2353" y="891" textLength="218" lengthAdjust="spacingAndGlyphs">Organized projects for campers</text>
              <text x="2068" y="1012.500" textLength="225" lengthAdjust="spacingAndGlyphs">•Reviewed and edited articles</text><text x="2068" y="1032.500" textLength="303" lengthAdjust="spacingAndGlyphs">•Participated in staff meetings where we</text><text x="2068" y="1052.500" textLength="319" lengthAdjust="spacingAndGlyphs">•Discussed how to improve our work ethic</text><text x="2068" y="1072.500" textLength="220" lengthAdjust="spacingAndGlyphs">•Came up with news to cover</text><text x="2068" y="1092.500" textLength="244" lengthAdjust="spacingAndGlyphs">•Created blog and article visuals</text>
              <text x="2068" y="1171" textLength="334" lengthAdjust="spacingAndGlyphs">•Learned and applied recipes for beverages</text><text x="2079" y="1191" textLength="496" lengthAdjust="spacingAndGlyphs">- improved my basic mental arithmetic skills to increase or deduct</text><text x="2091" y="1211" textLength="469" lengthAdjust="spacingAndGlyphs">from the original recipe depending if&#160; the cutomer’s beverage</text><text x="2067" y="1231" textLength="158" lengthAdjust="spacingAndGlyphs">contained a topping.</text><text x="2068" y="1251" textLength="272" lengthAdjust="spacingAndGlyphs">•Kept inventory of cash after closing</text><text x="2068" y="1271" textLength="316" lengthAdjust="spacingAndGlyphs">•Calculate change from cash transactions.</text></g>
          </g>
          <g class="arial" fill="#4a4636" font-size="17"><text x="2066" y="1529" textLength="225" lengthAdjust="spacingAndGlyphs">bobahoe (Hack@Brown 2019)</text><text x="2066" y="1549" textLength="233" lengthAdjust="spacingAndGlyphs">FEMPOW (TechTogether 2019)</text></g>
          <path d="M1847 210V2064M2026 210V2064M2066 210V2064M2333 210V2064M2603 210V2064M2643 210V2064M1814 613H2669M1814 653H2669M1814 767H2669M1814 836H2669M1814 1138H2669M1814 1623H2669M1814 1663H2669" stroke="#4bffff" stroke-width="2"/>
        </svg>
      </div>
      <div class="doc-status"><span>33.33%</span><span>Doc: 24.1M/296.2M</span><svg width="12" height="18" viewBox="0 0 12 18"><path d="M2 1L8 9L2 17" fill="none" stroke="#dcdcdc" stroke-width="2"/></svg><i></i></div>
    </div>

    <div class="dock">
      <div class="dock-head both"><svg width="16" height="12" viewBox="0 0 16 12" fill="none" stroke="#d0d0d0" stroke-width="1.800"><path d="M6 1L2 6L6 11M14 1L10 6L14 11"/></svg><svg width="16" height="12" viewBox="0 0 16 12" fill="none" stroke="#d0d0d0" stroke-width="1.800"><path d="M1 1L5 6L1 11M9 1L13 6L9 11"/></svg></div>
      <div class="dock-cols">
        <div class="iconcol">
          <div class="ic a"><b class="grip"></b><svg width="75" height="54" viewBox="2710 160 75 54"><path d="M2736 169h8v8h-8zM2736 181h8v8h-8z" fill="none" stroke="#dcdcdc" stroke-width="2"/><path d="M2735 193h10v9h-10z" fill="#dcdcdc"/><path d="M2751 172L2763 170L2762 174Q2769 188 2752 199Q2761 186 2757 177L2753 180z" fill="#dcdcdc"/></svg></div>
          <div class="ic b"><b class="grip"></b><svg width="75" height="112" viewBox="2710 242 75 112"><path d="M2730 252h4v4h-4zM2730 258h4v4h-4zM2730 264h4v4h-4z" fill="#dcdcdc"/><path d="M2736 253h8M2736 259h8M2736 265h8" stroke="#dcdcdc" stroke-width="1.800"/><use href="#brush" x="2736" y="255" width="36" height="30" color="#dcdcdc"/>
            <path d="M2727 313Q2732 314 2738 309Q2745 308 2746 315Q2744 321 2736 320Q2731 319 2727 313zM2748 313h19a2 2 0 0 1 0 4h-19zM2732 329h20v4h-20zM2753 330L2766 321Q2770 331 2766 341L2753 333z" fill="#dcdcdc"/></svg></div>
          <div class="ic c"><b class="grip"></b><svg width="75" height="112" viewBox="2710 380 75 112"><text x="2735" y="417" font-size="34" class="t-ui" fill="#dcdcdc" font-weight="400">A</text><path d="M2762 388V422" stroke="#dcdcdc" stroke-width="2"/><path d="M2750 447h11v30h-3v-27h-3v27h-3v-14h-3a8 8 0 0 1 0-16z" fill="#dcdcdc"/></svg></div>
        </div>
        <div class="panels">
          <section class="panel color">
            <div class="ptabs"><b class="on">Color</b><b>Swatches</b><svg width="20" height="14"><use href="#menu"/></svg></div>
            <div class="color-body">
              <svg width="62" height="64" viewBox="2806 212 62 64" fill="none"><path d="M2829 236h37v37h-37z" fill="#fff" stroke="#2c2c2c" stroke-width="2"/><path d="M2832 238h32v32h-32z" fill="#9ccad6"/><path d="M2807 213h42v42h-42z" fill="#2c2c2c" stroke="#8e8e8e" stroke-width="2"/><path d="M2810 216h36v36h-36z" fill="#fff"/></svg>
              <div class="picker"><svg width="16" height="16"><path d="M13 0A13 13 0 0 1 0 13" fill="none" stroke="#000" stroke-width="2"/></svg></div>
              <svg class="pointer" width="20" height="22" viewBox="0 0 20 22"><path d="M3 2H7L17 11L7 20H3z" fill="#e6e6e6" stroke="#222" stroke-width="2" stroke-linejoin="round"/></svg>
              <div class="hue"></div>
            </div>
          </section>
          <section class="panel props">
            <div class="ptabs"><b class="on">Properties</b><b>Adjustments</b><svg width="20" height="14"><use href="#menu"/></svg></div>
            <div class="type-row"><span class="type-ic">T</span><span>Type Layer Properties</span></div>
            <div class="props-body">
              <div class="pl">
                <div class="xy dim"><label>W:</label><span class="fld">2.32 in</span><svg width="30" height="16" color="#8f8f8f"><use href="#link"/></svg><label>H:</label><span class="fld">0.4 in</span></div>
                <div class="xy second"><label>X:</label><span class="fld">2.48 in</span><i></i><label>Y:</label><span class="fld">9.26 in</span></div>
                <hr>
                <div class="sel w382 t1"><span>Arial</span><i><svg><use href="#chev"/></svg></i></div>
                <div class="sel w382 t2"><span>Regular</span><i><svg><use href="#chev"/></svg></i></div>
                <div class="two-sel t3">
                  <svg width="46" height="36" viewBox="2806 1054 46 36"><g fill="#dcdcdc" class="t-slab"><text x="2807" y="1087" font-size="19">T</text><text x="2816" y="1087" font-size="36">T</text></g></svg>
                  <div class="sel w128"><span>12 pt</span><i><svg><use href="#chev"/></svg></i></div>
                  <svg width="78" height="36" viewBox="2980 1054 78 36"><path d="M3013 1057h34v21h-34zM3012 1085.500l6-5v4h24v-4l6 5-6 5v-4h-24v4z" fill="#dcdcdc"/><text x="3014" y="1076" font-size="22" class="arial" font-weight="700" fill="#444" textLength="32" lengthAdjust="spacingAndGlyphs">VA</text></svg>
                  <div class="sel w128"><span>0</span><i><svg><use href="#chev"/></svg></i></div>
                </div>
                <div class="two-sel t4">
                  <svg width="46" height="36" viewBox="2806 1117 46 36"><path d="M2816 1133h22M2816 1151h22M2811 1136v12" stroke="#dcdcdc" stroke-width="2"/><path d="M2811 1132l4 5h-8zM2811 1151l4-5h-8z" fill="#dcdcdc"/><g fill="#dcdcdc" class="t-ui" font-size="17"><text x="2821" y="1132">A</text><text x="2821" y="1150">A</text></g></svg>
                  <div class="sel w128"><span>(Auto)</span><i><svg><use href="#chev"/></svg></i></div>
                </div>
                <div class="align-row">
                  <svg width="150" height="56" viewBox="2806 1173 150 56" fill="none" stroke="#dcdcdc" stroke-width="2"><rect x="2809" y="1175" width="50" height="52" rx="4" fill="#353535" stroke="#686868"/><path d="M2821 1189h26M2821 1193h20M2821 1197h26M2821 1201h28M2821 1205h20M2821 1209h28M2821 1213h22M2874 1189h24M2876 1193h20M2872 1197h28M2872 1201h28M2878 1205h16M2872 1209h28M2876 1213h20M2926 1189h26M2932 1193h20M2924 1197h28M2924 1201h28M2932 1205h20M2924 1209h28M2930 1213h22"/></svg>
                  <label>Color:</label><span class="swatch"></span>
                </div>
                <hr class="h2">
                <div class="adv">Advanced...</div>
              </div>
              <div class="track"><i></i></div>
            </div>
          </section>
          <section class="panel layers">
            <div class="ptabs"><b class="on">Layers</b><b>Channels</b><b>Paths</b><svg width="20" height="14"><use href="#menu"/></svg></div>
            <div class="kind">
              <div class="sel w177"><svg width="22" height="22" viewBox="0 0 22 22" fill="none" stroke="#dcdcdc" stroke-width="2.600"><circle cx="9" cy="9" r="7"/><path d="M14 14L20 20" stroke-width="3.500"/></svg><span>Kind</span><i class="plain"><svg><use href="#chev"/></svg></i></div>
              <svg width="300" height="40" viewBox="2973 1448 300 40" fill="none" stroke="#dcdcdc" stroke-width="2">
                <path d="M2998 1459h23v18h-23z"/><path d="M3001 1475l6-9 4 5 3-4 5 8z" fill="#dcdcdc" stroke="none"/><use href="#half" x="3046" y="1457" width="22" height="22" stroke="none"/>
                <text x="3095" y="1478" font-size="27" fill="#dcdcdc" class="t-slab">T</text>
                <path d="M3145 1461h16v15h-16z"/><path d="M3142 1458h5v5h-5zM3159 1458h5v5h-5zM3142 1473h5v5h-5zM3159 1473h5v5h-5z" fill="#535353" stroke-width="1.800"/>
                <path d="M3196 1468v-10h9l6 6v13h-8M3205 1458v7h6"/><path d="M3192 1468h11v12h-11z" fill="#dcdcdc" stroke="none"/>
                <rect x="3237" y="1451" width="18" height="35" rx="9" fill="#3c3c3c" stroke="#6c6c6c"/><circle cx="3246" cy="1459" r="8" fill="#dcdcdc" stroke="none"/>
              </svg>
            </div>
            <div class="blend"><div class="sel w263"><span>Normal</span><i class="plain"><svg><use href="#chev"/></svg></i></div><label>Opacity:</label><div class="sel w103"><span>100%</span><i><svg><use href="#chev"/></svg></i></div></div>
            <div class="lock"><label>Lock:</label>
              <svg width="204" height="30" viewBox="2862 1565 204 30" fill="none" stroke="#dcdcdc" stroke-width="2"><path d="M2866 1570h21v20h-21z" fill="#4a4a4a" stroke="#999"/><path d="M2867 1571h6v6h-6zM2880 1571h6v6h-6zM2873 1577h7v6h-7zM2867 1583h6v6h-6zM2880 1583h6v6h-6z" fill="#999" stroke="none"/><use href="#brush" x="2909" y="1567" width="26" height="28" color="#999" stroke="none"/><use href="#move" x="2950" y="1567" width="26" height="26" color="#dcdcdc" stroke="none"/><path d="M2999 1572h12l7 7v10h-19zM2994 1572h3M2994 1589h3M2999 1567v2M3018 1567v2M3020 1572h3M3020 1589h3M2999 1591v2M3018 1591v2"/><path d="M3011 1572v6h7" fill="#dcdcdc"/><rect x="3042" y="1576" width="20" height="15" rx="2" fill="#dcdcdc" stroke="none"/><path d="M3046 1577v-3a6 5 0 0 1 12 0v3" stroke-width="2.600"/><circle cx="3052" cy="1582.500" r="2.500" fill="#444" stroke="none"/></svg>
              <label>Fill:</label><div class="sel w103"><span>100%</span><i><svg><use href="#chev"/></svg></i></div></div>
            <div class="list-wrap">
              <div class="list">
                <div class="ly stub"><span class="eye"></span></div>
                <div class="ly"><span class="eye"><svg><use href="#eye"/></svg></span><span class="t">T</span><span class="nm">• Reviewed and...staff meeting</span></div>
                <div class="ly"><span class="eye"><svg><use href="#eye"/></svg></span><span class="t">T</span><span class="nm">Kung Fu Tea Barista/ Cashier</span></div>
                <div class="ly"><span class="eye"><svg><use href="#eye"/></svg></span><span class="t">T</span><span class="nm">• Learned and...proved my bas</span></div>
                <div class="ly grp"><span class="eye"><svg><use href="#eye"/></svg></span><svg class="tw" width="20" height="20" viewBox="0 0 20 20"><path d="M7 2L14 10L7 18" fill="none" stroke="#c8c8c8" stroke-width="2"/></svg><svg class="fo" width="28" height="22"><use href="#folder"/></svg><span class="nm">Club Activities</span></div>
                <div class="ly grp"><span class="eye"><svg><use href="#eye"/></svg></span><svg class="tw" width="20" height="20" viewBox="0 0 20 20"><path d="M2 6L10 14L18 6" fill="none" stroke="#c8c8c8" stroke-width="2"/></svg><svg class="fo" width="28" height="22" viewBox="0 0 28 22"><path d="M1 11V1H12L14 4H27V11" fill="none" stroke="#dcdcdc" stroke-width="2"/><path d="M0 10H28V22H0z" fill="#dcdcdc"/></svg><span class="nm">Personal Projects</span></div>
                <div class="ly sel-row"><span class="eye"><svg><use href="#eye"/></svg></span><span class="t"><svg width="72" height="72" viewBox="0 0 72 72"><path d="M1 25V1H25M50 1H71V25M1 50V71H25M50 71H71V50" fill="none" stroke="#fff" stroke-width="2"/></svg>T</span><span class="nm">bobahoe (Hack...gether 2019)</span></div>
              </div>
              <div class="track low"><i></i></div>
            </div>
            <svg class="lfoot" width="568" height="48" viewBox="2790 2050 568 48" fill="none" stroke="#dcdcdc" stroke-width="2">
              <use href="#link" x="2951" y="2065" width="30" height="16" color="#8c8c8c" stroke="none"/>
              <text x="3011" y="2080" font-size="26" font-style="italic" class="t-ui" fill="#dcdcdc" stroke="none" font-weight="400" textLength="22" lengthAdjust="spacingAndGlyphs">fx</text><path d="M3032 2086h8l-4 4zM3140 2086h8l-4 4z" fill="#fff" stroke="none"/>
              <path d="M3063 2064h25v18h-25z" fill="#dcdcdc" stroke="none"/><circle cx="3075.500" cy="2073" r="6" fill="#444" stroke="none"/>
              <use href="#half" x="3118" y="2062" width="22" height="22" stroke="none"/><use href="#folder" x="3170" y="2063" width="26" height="20" stroke="none"/>
              <path d="M3228 2064h18v18h-8l-10-9z"/><path d="M3228 2072h10v10z" fill="#dcdcdc" stroke="none"/>
              <path d="M3280 2066h22M3287 2065v-3h8v3M3284 2067v17h15v-17M3288 2070v11M3291.500 2070v11M3295 2070v11"/>
            </svg>
          </section>
        </div>
      </div>
    </div>
  </div>
</section>
</body>
</html>
```
FILE: styles.css
```css
* { box-sizing: border-box; }
body { margin: 0; width: 3360px; height: 2100px; display: flex; gap: 5px; background: #1e1e1e; overflow: hidden; font-family: Inter, "Liberation Sans", sans-serif; }
svg { display: block; flex: none; }
p, h1, h2 { margin: 0; }
.defs { position: absolute; }
.t-ui { font-family: Inter, sans-serif; }
.t-light { font-family: Inter, sans-serif; font-weight: 300; }
.t-serif { font-family: "Liberation Serif", serif; }
.t-slab { font-family: "DejaVu Serif", serif; stroke: #dcdcdc; stroke-width: 1; }
.t-cjk { font-family: "Noto Sans CJK SC", sans-serif; }

/* Word window */
.word { width: 1693px; height: 2100px; flex: none; display: flex; flex-direction: column; border: solid #5e5e5e; border-width: 2px 2px 2px 0; border-top-color: #747474; border-radius: 10px; overflow: hidden; background: #2d2d2d; }
.w-title { height: 61px; display: flex; align-items: center; white-space: nowrap; }
.autosave { width: 121px; padding-left: 10px; font-size: 22.5px; font-weight: 500; color: #5a5a5a; letter-spacing: -.2px; }
.toggle { width: 82px; height: 28px; border-radius: 14px; background: #292929; display: flex; align-items: center; gap: 7px; padding-left: 2px; font-size: 16px; font-weight: 500; color: #5a5a5a; margin-right: 9px; }
.toggle i { width: 25px; height: 25px; border-radius: 50%; background: #4e4e4e; }
.doc-name { width: 134px; padding-left: 7px; font-size: 25px; font-weight: 500; color: #e6e6e6; }
.doc-saved { width: 269px; padding-left: 7px; font-size: 25px; color: #8c8c8c; letter-spacing: .3px; }
.w-search { width: 426px; height: 36px; margin-right: 16px; border-radius: 5px; background: #555; display: flex; align-items: center; padding-left: 10px; gap: 5px; font-size: 24px; font-weight: 500; color: #949494; letter-spacing: .4px; }
.w-tabs { height: 67px; border-top: 2px solid #080808; display: grid; grid-template-columns: 122px 122px 112px 134px 133px 190px 154px 136px 90px 113px 133px 192px; padding-left: 23px; align-items: center; color: #9b9b9b; font-size: 25.5px; font-weight: 500; letter-spacing: .15px; }
.w-tabs > b { font-weight: 600; letter-spacing: -.2px; width: 76px; height: 57px; margin: 0 0 5px -1px; padding: 14px 0 0 1px; border-bottom: 6px solid #e2e2e2; border-radius: 3px; line-height: 30px; align-self: start; }
.w-tabs > span { padding-bottom: 7px; }
.w-tabs > svg { margin-bottom: 5px; }
.w-btn { height: 48px; border-radius: 7px; background: #4b4b4b; display: flex; align-items: center; gap: 10px; font-size: 24px; font-weight: 500; color: #8e8e8e; letter-spacing: 0; padding-left: 16px; margin-bottom: 2px; }
.comments { margin-left: 20px; width: 192px; }
.ribbon { height: 144px; display: flex; border-bottom: 3px solid #050505; }
.vr { width: 2px; height: 124px; margin-top: 2px; background: #4d4d4d; flex: none; }
.g-paste { width: 184px; padding: 4px 0 0 16px; }
.g-paste > svg { overflow: visible; }
.paste-row { display: flex; padding-left: 25px; height: 50px; align-items: flex-start; gap: 30px; color: #b0b0b0; font-size: 20px; line-height: 25px; font-weight: 500; }
.paste-row svg { margin-top: 14px; }
.g-font { width: 747px; padding: 10px 0 0 20px; }
.font-row { height: 52px; display: flex; align-items: center; }
.font-row.two { margin-top: 12px; }
.combo { height: 48px; background: #333; border: 1.5px solid #3e3e3e; border-bottom-color: #555; border-radius: 6px; display: flex; align-items: center; justify-content: space-between; padding: 0 8px 0 11px; margin-right: 4px; font-size: 24px; letter-spacing: .2px; color: #ababab; }
.fam { width: 198px; }
.combo.size { width: 108px; margin-right: 10px; }
.bold-btn { width: 48px; height: 48px; margin-right: 8px; border-radius: 7px; background: #4b4b4b; color: #9a9a9a; font-weight: 600; font-size: 28px; text-align: center; line-height: 46px; }
.g-big { padding-top: 2px; color: #b0b0b0; font-size: 20px; font-weight: 500; }
.styles { width: 136px; padding-left: 18px; }
.styles span { padding-left: 17px; }
.sens { padding-left: 22px; color: #5c5c5c; letter-spacing: .3px; }

.w-canvas { flex: 1; background: #272727; padding: 28px 0 0 160px; overflow: hidden; }
.page { position: relative; width: 1376px; height: 1752px; background: #fff; border-top: 2px solid #c9c9c9; padding: 80px 67px 0 80px; font-family: "Liberation Serif", serif; font-size: 27px; line-height: 31px; color: #000; white-space: nowrap; }
.marks { position: absolute; left: 0; top: -2px; }
.head { height: 117px; display: flex; padding-left: 14px; overflow: hidden; position: relative; font-size: 31.600px; line-height: 36px; }
.who { width: 618px; }
.who h1 { font: bold condensed 35px/40px "DejaVu Serif"; letter-spacing: .9px; margin: 1px 0 3px; }
.mail { color: #2a63c1; }
.degree { padding-top: 39px; }
.addr { display: flex; height: 135px; margin-top: 32px; border-bottom: 2px solid #000; width: 1220px; }
.addr p:first-child { width: 529px; padding-left: 107px; }
.addr p + p { width: 524px; text-align: center; }
.edu-h { font-size: 27px; line-height: 31px; text-align: center; margin: 2px 11px 0 0; }
.edu { display: grid; grid-template-columns: 432px 348px 420px; margin-top: 29px; height: 151px; }
.edu > * { padding-top: 2px; }
.edu > :first-child { padding-left: 96px; }
.edu > * + * { border-left: 2px solid #000; padding-left: 11px; }
.prog { font-style: italic; font-size: 25px; line-height: 27px; }
.skills { display: grid; grid-template-columns: 526px 700px; margin-top: 43px; height: 250px; width: 1229px; border: 2px solid #000; overflow: hidden; text-align: center; padding-top: 1px; }
.work-h { font-size: 27px; line-height: 31px; text-align: center; margin: 1px 11px 0 0; }
.jobs { display: grid; grid-template-columns: 608px 607px; grid-template-rows: 156px 187px 93px; width: 1217px; margin-top: 62px; border: 2px solid #000; border-width: 2px 0 0 2px; overflow: hidden; letter-spacing: .1px; }
.jobs p { border: solid #000; border-width: 0 2px 2px 0; padding: 1px 0 0 12px; overflow: hidden; }
.jobs sup { font-size: 18px; line-height: 0; vertical-align: 8px; }

.w-status { height: 43px; border-top: 1px solid #111; background: linear-gradient(#474747, #383838); display: grid; grid-template-columns: 161px 156px 78px 410px 44px 88px 298px 303px 90px; padding-left: 49px; align-items: center; font-size: 24px; color: #f0f0f0; letter-spacing: -.05px; white-space: nowrap; }
.w-status > :last-child { letter-spacing: -1px; }

/* Photoshop window */
.ps { width: 1662px; height: 2100px; flex: none; display: flex; flex-direction: column; background: #535353; border: 2px solid #3a3a3a; border-width: 2px 2px 2px 0; border-radius: 10px; overflow: hidden; color: #dcdcdc; font-size: 20px; }
.p-title { height: 44px; border-bottom: 2px solid #383838; display: flex; align-items: center; font-size: 24.500px; color: #d8d8d8; }
.p-title span { margin-left: 532px; padding-top: 4px; letter-spacing: .8px; white-space: nowrap; }
.p-options { height: 68px; border-bottom: 2px solid #383838; display: flex; align-items: center; }
.sel { height: 36px; flex: none; border: 2px solid #686868; border-radius: 5px; background: #454545; display: flex; align-items: center; color: #e6e6e6; white-space: nowrap; }
.sel span { flex: 1; padding-left: 7px; }
.sel i { width: 30px; height: 100%; border-left: 2px solid #686868; display: flex; align-items: center; justify-content: center; color: #dcdcdc; }
.sel i.plain { border: 0; }
.sel i svg { width: 14px; height: 10px; margin-top: 3px; }
.w316 { width: 316px; margin-right: 19px; }
.w312 { width: 313px; }
.w153 { width: 153px; }
.w135 { width: 135px; }
.w135 span { padding-left: 14px; }
.p-body { flex: 1; display: flex; min-height: 0; }
.tools { width: 80px; border-right: 4px solid #3a3a3a; }
.tools .grip { margin: 7px 0 18px 18px; }
.dock-head { height: 24px; background: #424242; border-bottom: 2px solid #383838; padding: 5px 0 0 8px; }
.grip { display: block; width: 38px; height: 8px; background: repeating-linear-gradient(90deg, #3c3c3c 0 2px, #535353 2px 4px); }
.tool { height: 52px; width: 76px; }
.tool svg { width: 76px; height: 52px; color: #dcdcdc; }
.tool.on { background: #353535; border: 2px solid #686868; border-radius: 5px; width: 68px; height: 50px; margin: 1px 0 1px 3px; }
.tool.on svg { margin: -3px 0 0 -5px; }
.tool .s { fill: none; stroke: #dcdcdc; stroke-width: 2.200; }
.tool .b { stroke-width: 3.600; }
.tool .f { fill: #dcdcdc; }
.tool .c { fill: #c4c4c4; }
.docwin { width: 929px; border-right: 2px solid #3a3a3a; display: flex; flex-direction: column; background: #4b4b4b; }
.doc-tabs { height: 58px; background: #424242; border-bottom: 2px solid #383838; }
.doc-tab { width: 846px; height: 56px; background: #535353; border-right: 2px solid #383838; display: flex; align-items: center; padding: 2px 0 0 14px; gap: 21px; font: 600 22.500px "Open Sans"; color: #f2f2f2; white-space: nowrap; }
.doc-tab span { letter-spacing: .45px; }
.ruler-x, .doc-mid > svg:first-child { background: #474747; }
.doc-mid { display: flex; }
.canvas { background: #272727; }
.doc-status { flex: 1; display: grid; grid-template-columns: 118px 350px 1fr 440px; align-items: center; border-top: 2px solid #3f3f3f; background: #535353; font-size: 20.500px; color: #cfcfcf; }
.doc-status span { padding-bottom: 1px; }
.doc-status span:first-child { background: #444; height: 100%; padding: 3px 0 0 23px; color: #e6e6e6; }
.doc-status span + span { padding-left: 79px; }
.doc-status i { background: #4b4b4b; height: 100%; }

/* typefaces of the artwork */
.cond { font-family: "Open Sans", sans-serif; font-weight: 400; }
.bold { font-family: "Open Sans", sans-serif; font-weight: 700; }
.mono { font-family: "DejaVu Sans Mono", monospace; }
.code { font-family: "Liberation Mono", monospace; }
.lato { font-family: Lato, sans-serif; }
.arial { font-family: "Liberation Sans", sans-serif; }
.caps { font-variant-caps: small-caps; }

.dock { flex: 1; display: flex; flex-direction: column; border-left: 3px solid #3a3a3a; background: #535353; }
.dock-head.both { display: flex; justify-content: space-between; padding: 5px 11px 0 50px; }
.dock-cols { flex: 1; display: flex; }
.iconcol { width: 79px; border-right: 4px solid #3a3a3a; }
.ic { border-bottom: 2px solid #3a3a3a; padding-top: 6px; }
.ic .grip { margin-left: 18px; }
.ic svg { margin-top: 8px; }
.ic.a { height: 82px; }
.ic.b, .ic.c { height: 138px; }
.panels { flex: 1; display: flex; flex-direction: column; padding-left: 1px; }
.panel { border-bottom: 2px solid #3a3a3a; }
.ptabs { display: flex; height: 55px; background: #424242; border-bottom: 2px solid #3a3a3a; font: 600 20px "Open Sans"; letter-spacing: .5px; color: #a8a8a8; }
.ptabs b { font-weight: 600; padding: 15px 19px 0 17px; border-right: 2px solid #3a3a3a; }
.ptabs b.on { background: #535353; color: #f0f0f0; margin-bottom: -2px; padding-left: 19px; }
.ptabs svg { margin: 20px 12px 0 auto; }
.props .ptabs b, .layers .ptabs b { padding-top: 13px; }
.props .ptabs svg, .layers .ptabs svg { margin-top: 19px; }
.color { height: 507px; }
.color-body { display: flex; padding: 15px 0 0 16px; }
.color-body > svg:first-child { margin: 4px 12px 0 0; }
.picker { width: 374px; height: 398px; background: linear-gradient(transparent, #000), linear-gradient(90deg, #fff, #e83223); }
.pointer { margin: 387px 0 0 13px; }
.hue { width: 38px; height: 398px; margin-left: 1px; background: linear-gradient(#ea3323, #ea3bf7 17%, #0018f5 33%, #73fbfd 50%, #75fb4c 67%, #ffff54 83%, #ea3323 98%); }
.props { height: 726px; border-top: 3px solid #3a3a3a; margin-top: 2px; }
.type-row { height: 69px; border-bottom: 2px solid #404040; display: flex; align-items: center; gap: 9px; padding-left: 20px; letter-spacing: .15px; }
.type-ic { width: 48px; height: 47px; border: 2px solid #686868; border-radius: 5px; background: #353535; font: 27px/42px "DejaVu Serif"; -webkit-text-stroke: 1px #dcdcdc; text-align: center; }
.props-body { display: flex; }
.pl { width: 538px; height: 546px; padding-left: 8px; }
.pl hr { border: 0; height: 2px; background: #404040; margin: 28px 8px 0 0; }
.xy { display: grid; grid-template-columns: 32px 122px 76px 29px 122px; align-items: center; margin: 24px 0 0 12px; white-space: nowrap; }
.xy svg { margin-left: 22px; }
.xy label { color: #a8a8a8; }
.xy.second { grid-template-columns: 32px 122px 76px 26px 122px; margin-top: 30px; }
.xy .fld { height: 32px; border: 2px solid #686868; background: #454545; padding-left: 6px; line-height: 28px; letter-spacing: .2px; color: #e6e6e6; }
.xy.second label { padding-left: 4px; }
.xy.second i + label { padding: 0; }
.dim label { color: #8c8c8c; }
.dim .fld { color: #6e6e6e; border-color: #606060; background: #4e4e4e; }
.w382 { width: 382px; margin-left: 8px; }
.t1 { margin-top: 17px; }
.t2 { margin-top: 18px; }
.two-sel { display: flex; margin-left: 8px; }
.t3 { margin-top: 26px; }
.t4 { margin-top: 27px; }
.w128 { width: 128px; }
.align-row { display: flex; align-items: center; margin: 20px 0 0 8px; color: #c2c2c2; }
.align-row label { width: 67px; margin-left: 39px; }
.swatch { width: 56px; height: 36px; border: 2px solid #3a3a3a; background: #444033; }
.pl hr.h2 { margin-top: 18px; }
.adv { width: 156px; height: 48px; margin: 20px 0 0 123px; border: 2px solid #686868; border-radius: 5px; background: #454545; text-align: center; line-height: 44px; color: #e6e6e6; }
.track { width: 30px; background: #4a4a4a; padding: 5px 0 0 6px; }
.track i { display: block; width: 20px; height: 165px; border-radius: 10px; background: #6a6a6a; }
.layers { flex: 1; border-top: 2px solid #3a3a3a; border-bottom: 0; margin-top: 2px; display: flex; flex-direction: column; }
.kind { height: 65px; display: flex; align-items: center; border-bottom: 2px solid #404040; padding: 9px 0 0 6px; }
.w177 { width: 177px; padding-left: 16px; }
.w177 span { padding-left: 5px; letter-spacing: .5px; }
.blend { height: 56px; display: flex; align-items: center; border-bottom: 2px solid #404040; padding-left: 6px; }
.w263 { width: 263px; }
.w263 span { padding-left: 14px; }
.blend label { width: 91px; padding-left: 7px; color: #b8b8b8; }
.w103 { width: 103px; }
.w103 span { padding-left: 6px; }
.w103 i { width: 29px; }
.lock { height: 57px; display: flex; align-items: center; padding-left: 10px; color: #b8b8b8; }
.lock label { width: 62px; }
.lock svg + label { width: 84px; padding-left: 46px; }
.list-wrap { display: flex; height: 437px; border-top: 1px solid #484848; }
.list { width: 538px; }
.ly { height: 82px; display: flex; align-items: center; border-bottom: 2px solid #444; }
.ly.stub { height: 10px; }
.ly.grp { height: 50px; }
.eye { width: 61px; height: 100%; border-right: 2px solid #444; display: flex; align-items: center; padding-left: 18px; flex: none; }
.eye svg { width: 26px; height: 16px; }
.t { width: 152px; padding-left: 91px; font: 36px "DejaVu Serif"; -webkit-text-stroke: 1px #dcdcdc; position: relative; }
.t svg { position: absolute; left: 67px; top: -14px; }
.nm { white-space: nowrap; letter-spacing: .1px; font-size: 20px; color: #e6e6e6; }
.tw { margin: 0 7px 0 36px; }
.fo { margin-right: 22px; }
.sel-row { background: #6a6a6a; }
.sel-row .eye { background: #535353; }
.low { padding-top: 270px; }
.low i { height: 118px; }
.lfoot { border-top: 2px solid #404040; }
```
